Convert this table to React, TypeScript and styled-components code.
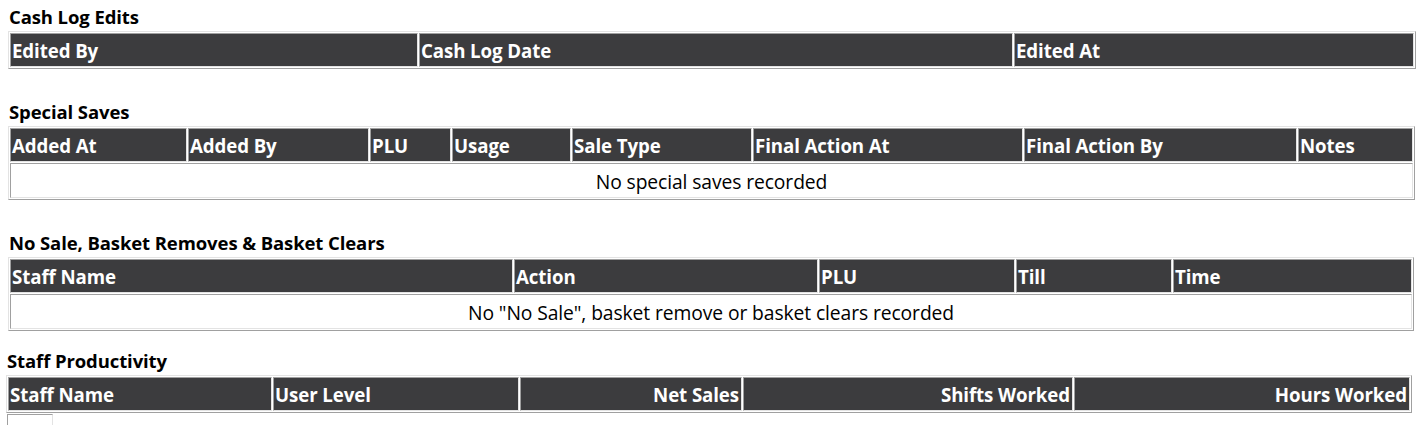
import React from "react";
import styled, { createGlobalStyle } from "styled-components";

const Global = createGlobalStyle`
  html, body { margin: 0; padding: 0; background: #fff; }
  body { font-family: "Open Sans", "Noto Sans", sans-serif; color: #000; }
`;

const Page = styled.div`
  display: flex;
  flex-direction: column;
  padding: 0 0 0 8px;
  width: 1408px;
`;

const Section = styled.section<{ $top: number; $shift?: number }>`
  display: flex;
  flex-direction: column;
  align-items: flex-start;
  margin-top: ${(p) => p.$top}px;
  margin-left: ${(p) => p.$shift ?? 0}px;
`;

const Title = styled.h3`
  margin: 0 0 3px 1px;
  font-size: 18.5px;
  font-weight: 700;
  line-height: 23px;
  letter-spacing: -0.1px;
`;

const Table = styled.table`
  width: 1406px;
  table-layout: fixed;
  border-collapse: separate;
  border-spacing: 1px;
  border-style: solid;
  border-width: 1px;
  border-color: #e3e3e3 #a0a0a0 #a0a0a0 #e3e3e3;
`;

const Th = styled.th<{ $align?: "left" | "right" }>`
  box-sizing: border-box;
  height: 34px;
  padding: 2px 2px 0 1px;
  line-height: 30px;
  vertical-align: top;
  background: #3c3c3e;
  color: #fff;
  font-size: 18.7px;
  font-weight: 700;
  letter-spacing: -0.1px;
  text-align: ${(p) => p.$align ?? "left"};
  white-space: nowrap;
  overflow: hidden;
  border-style: solid;
  border-width: 1px;
  border-color: #a0a0a0 #e3e3e3 #e3e3e3 #a0a0a0;
`;

const Td = styled.td`
  box-sizing: border-box;
  height: 35px;
  padding: 3px 2px 0;
  line-height: 30px;
  vertical-align: top;
  font-size: 19.3px;
  letter-spacing: -0.1px;
  text-align: center;
  border-style: solid;
  border-width: 1px;
  border-color: #a0a0a0 #e3e3e3 #e3e3e3 #a0a0a0;
`;

const Stub = styled.div`
  width: 44px;
  height: 10px;
  margin: 1px 0 0 1px;
  border-style: solid;
  border-width: 1px 1px 0 1px;
  border-color: #a0a0a0 #e3e3e3 #e3e3e3 #a0a0a0;
`;

type Col = { label: string; width: number; align?: "left" | "right" };

const DataTable: React.FC<{ cols: Col[]; empty?: string }> = ({ cols, empty }) => (
  <Table>
    <colgroup>
      {cols.map((c) => (
        <col key={c.label} style={{ width: c.width }} />
      ))}
    </colgroup>
    <thead>
      <tr>
        {cols.map((c) => (
          <Th key={c.label} $align={c.align}>
            {c.label}
          </Th>
        ))}
      </tr>
    </thead>
    {empty && (
      <tbody>
        <tr>
          <Td colSpan={cols.length}>{empty}</Td>
        </tr>
      </tbody>
    )}
  </Table>
);

export default function App() {
  return (
    <>
      <Global />
      <Page>
        <Section $top={5}>
          <Title>Cash Log Edits</Title>
          <DataTable
            cols={[
              { label: "Edited By", width: 408 },
              { label: "Cash Log Date", width: 594 },
              { label: "Edited At", width: 400 },
            ]}
          />
        </Section>
        <Section $top={31}>
          <Title>Special Saves</Title>
          <DataTable
            cols={[
              { label: "Added At", width: 177 },
              { label: "Added By", width: 181 },
              { label: "PLU", width: 81 },
              { label: "Usage", width: 119 },
              { label: "Sale Type", width: 180 },
              { label: "Final Action At", width: 270 },
              { label: "Final Action By", width: 273 },
              { label: "Notes", width: 115 },
            ]}
            empty="No special saves recorded"
          />
        </Section>
        <Section $top={31}>
          <Title>No Sale, Basket Removes &amp; Basket Clears</Title>
          <DataTable
            cols={[
              { label: "Staff Name", width: 503 },
              { label: "Action", width: 304 },
              { label: "PLU", width: 196 },
              { label: "Till", width: 156 },
              { label: "Time", width: 239 },
            ]}
            empty={'No "No Sale", basket remove or basket clears recorded'}
          />
        </Section>
        <Section $top={18} $shift={-2}>
          <Title>Staff Productivity</Title>
          <DataTable
            cols={[
              { label: "Staff Name", width: 264 },
              { label: "User Level", width: 246 },
              { label: "Net Sales", width: 222, align: "right" },
              { label: "Shifts Worked", width: 330, align: "right" },
              { label: "Hours Worked", width: 336, align: "right" },
            ]}
          />
          <Stub />
        </Section>
      </Page>
    </>
  );
}
